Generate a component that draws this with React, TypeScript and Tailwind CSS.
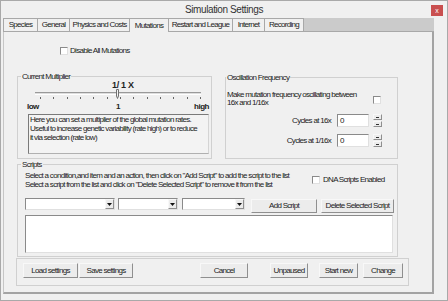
import React from 'react';

const font = "[font-family:'Liberation_Sans',Arial,sans-serif]";
const sunken = 'border border-t-[#8a8a8a] border-l-[#8a8a8a] border-r-[#e0e0e0] border-b-[#e0e0e0]';
const raised = 'border border-t-[#f8f8f8] border-l-[#f8f8f8] border-r-[#8f8f8f] border-b-[#8f8f8f]';

function Check() {
  return <span className={`block w-[8px] h-[8px] shrink-0 bg-white ${sunken}`} />;
}

function Btn({ className, children }: { className: string; children: React.ReactNode }) {
  return (
    <div className={`flex items-center justify-center bg-[#ececec] whitespace-nowrap leading-none ${raised} ${className}`}>
      {children}
    </div>
  );
}

function Combo({ className }: { className: string }) {
  return (
    <div className={`h-[12px] flex bg-white ${sunken} ${className}`}>
      <div className="flex-1" />
      <div className={`w-[9px] flex items-center justify-center bg-[#ececec] ${raised}`}>
        <svg width="5" height="3" viewBox="0 0 5 3">
          <path d="M0 0H5L2.5 3Z" fill="#111" />
        </svg>
      </div>
    </div>
  );
}

function Spin() {
  return (
    <div className="ml-[4px] w-[9px] h-[13px] flex flex-col gap-[1px]">
      <div className={`flex-1 flex items-center justify-center bg-[#ececec] ${raised}`}>
        <span className="block w-[3px] h-[1px] bg-[#333]" />
      </div>
      <div className={`flex-1 flex items-center justify-center bg-[#ececec] ${raised}`}>
        <span className="block w-[3px] h-[1px] bg-[#333]" />
      </div>
    </div>
  );
}

function CycleRow({ label }: { label: string }) {
  return (
    <div className="mt-[7px] flex items-center justify-end pr-[15px]">
      <span className="whitespace-nowrap">{label}</span>
      <div className={`ml-[6px] w-[32px] h-[13px] flex items-center pl-[2px] bg-white ${sunken}`}>0</div>
      <Spin />
    </div>
  );
}

const tabs = [
  { name: 'Species', w: 'w-[35px] border-l' },
  { name: 'General', w: 'w-[32px]' },
  { name: 'Physics and Costs', w: 'w-[60px]' },
  { name: 'Mutations', w: 'w-[39px]', active: true },
  { name: 'Restart and League', w: 'w-[64px]' },
  { name: 'Internet', w: 'w-[32px]' },
  { name: 'Recording', w: 'w-[39px]' },
];

export default function App() {
  return (
    <div className={`w-[448px] h-[301px] bg-[#f0f0f0] border border-[#a9a9a9] flex flex-col text-[8px] tracking-[-0.7px] text-[#222] ${font}`}>
      {/* Title bar */}
      <div className="h-[16px] relative flex items-center justify-center text-[10px] tracking-[-0.4px] text-[#333]">
        <span className="mt-[1px]">Simulation Settings</span>
        <div className="absolute right-[4px] top-[4px] w-[12px] h-[11px] bg-[#c94f4f] flex items-center justify-center">
          <span className="text-white text-[7px] leading-none tracking-normal">x</span>
        </div>
      </div>

      <div className="flex-1 flex flex-col pl-[2px] pr-[13px] pb-[6px] pt-[1px]">
        {/* Tabs */}
        <div className="h-[14px] flex shrink-0">
          {tabs.map((t) => (
            <div
              key={t.name}
              className={`${t.w} flex items-center justify-center whitespace-nowrap border-t border-r border-[#a8a8a8] bg-[#f0f0f0] ${t.active ? '' : 'border-b'}`}
            >
              {t.name}
            </div>
          ))}
          <div className="flex-1 bg-[#cbcbcb] border-b border-[#a8a8a8]" />
        </div>

        {/* Panel */}
        <div className="flex-1 flex flex-col border-l border-l-[#c6c6c6] border-r-2 border-r-[#a3a3a3] border-b-2 border-b-[#a3a3a3]">
          <div className="mt-[14px] ml-[56px] h-[10px] flex items-center gap-[2px]">
            <Check />
            <span>Disable All Mutations</span>
          </div>

          <div className="mt-[16px] ml-[13px] flex items-start">
            <fieldset className="w-[195px] h-[87px] border border-[#d0d0d0]">
              <legend className="ml-[3px] px-[1px] leading-[9px]">Current Multiplier</legend>
              <div className="h-[8px] leading-[8px] font-bold text-[9px] tracking-[-0.3px] pl-[94px]">1/ 1 X</div>
              <div className="relative mt-[3px] ml-[17px] w-[166px] h-[3px] border-t border-t-[#9a9a9a] border-b border-b-white bg-[#dedede]">
                <svg className="absolute left-[80px] top-[-4px]" width="5" height="10" viewBox="0 0 5 10">
                  <path d="M1.5 0.5H3.5V7L2.5 9.5L1.5 7Z" fill="#f4f4f4" stroke="#707070" strokeWidth="1" />
                </svg>
              </div>
              <div className="mt-[2px] ml-[22px] w-[161px] h-[2px] flex justify-between">
                {Array.from({ length: 13 }).map((_, i) => (
                  <span key={i} className="block w-[1px] h-[2px] bg-[#666]" />
                ))}
              </div>
              <div className="mt-[4px] ml-[9px] mr-[2px] grid grid-cols-[1fr_auto_1fr] font-bold leading-[8px] tracking-[-0.5px]">
                <span>low</span>
                <span>1</span>
                <span className="text-right">high</span>
              </div>
              <div className="mt-[3px] ml-[10px] w-[181px] h-[40px] pl-[1px] leading-[9px] whitespace-nowrap overflow-hidden bg-[#f3f3f3] border border-t-[#7a7a7a] border-l-[#7a7a7a] border-r-[#d4d4d4] border-b-[#b0b0b0]">
                Here you can set a multiplier of the global mutation rates.
                <br />
                Useful to increase genetic variability (rate high) or to reduce
                <br />
                it via selection (rate low)
              </div>
            </fieldset>

            <fieldset className="ml-[13px] mt-[1px] w-[173px] h-[86px] border border-[#d0d0d0]">
              <legend className="px-[1px] leading-[9px]">Oscillation Frequency</legend>
              <div className="mt-[9px] pl-[1px] pr-[16px] flex items-start">
                <div className="leading-[8px] whitespace-nowrap">
                  Make mutation frequency oscillating between
                  <br />
                  16x and 1/16x
                </div>
                <div className="ml-auto mt-[5px]">
                  <Check />
                </div>
              </div>
              <CycleRow label="Cycles at 16x" />
              <CycleRow label="Cycles at 1/16x" />
            </fieldset>
          </div>

          <fieldset className="mt-[1px] ml-[13px] w-[381px] h-[97px] border border-[#d0d0d0]">
            <legend className="ml-[3px] px-[1px] leading-[9px]">Scripts</legend>
            <div className="mt-[2px] pl-[7px] flex items-center">
              <div className="w-[287px] shrink-0 leading-[9px] whitespace-nowrap">
                Select a condition,and item and an action, then click on "Add Script" to add the script to the list
                <br />
                Select a script from the list and click on "Delete Selected Script" to remove it from the list
              </div>
              <div className="flex items-center gap-[3px] whitespace-nowrap">
                <Check />
                <span>DNA Scripts Enabled</span>
              </div>
            </div>
            <div className="mt-[9px] pl-[7px] flex items-start">
              <Combo className="w-[90px]" />
              <Combo className="ml-[3px] w-[60px]" />
              <Combo className="ml-[4px] w-[63px]" />
              <Btn className="mt-[1px] ml-[6px] w-[66px] h-[14px]">Add Script</Btn>
              <Btn className="mt-[1px] ml-[4px] w-[73px] h-[14px]">Delete Selected Script</Btn>
            </div>
            <div className={`mt-[2px] ml-[7px] w-[368px] h-[38px] bg-white ${sunken}`} />
          </fieldset>

          <div className="mt-[1px] ml-[12px] w-[393px] h-[28px] border border-[#d0d0d0] flex items-start pt-[4px]">
            <Btn className="ml-[6px] w-[55px] h-[15px]">Load settings</Btn>
            <Btn className="ml-[1px] w-[54px] h-[15px]">Save settings</Btn>
            <Btn className="ml-[67px] w-[48px] h-[15px]">Cancel</Btn>
            <Btn className="ml-[22px] w-[38px] h-[15px]">Unpaused</Btn>
            <Btn className="ml-[11px] w-[39px] h-[15px]">Start new</Btn>
            <Btn className="ml-[5px] w-[40px] h-[15px]">Change</Btn>
          </div>
        </div>
      </div>
    </div>
  );
}
